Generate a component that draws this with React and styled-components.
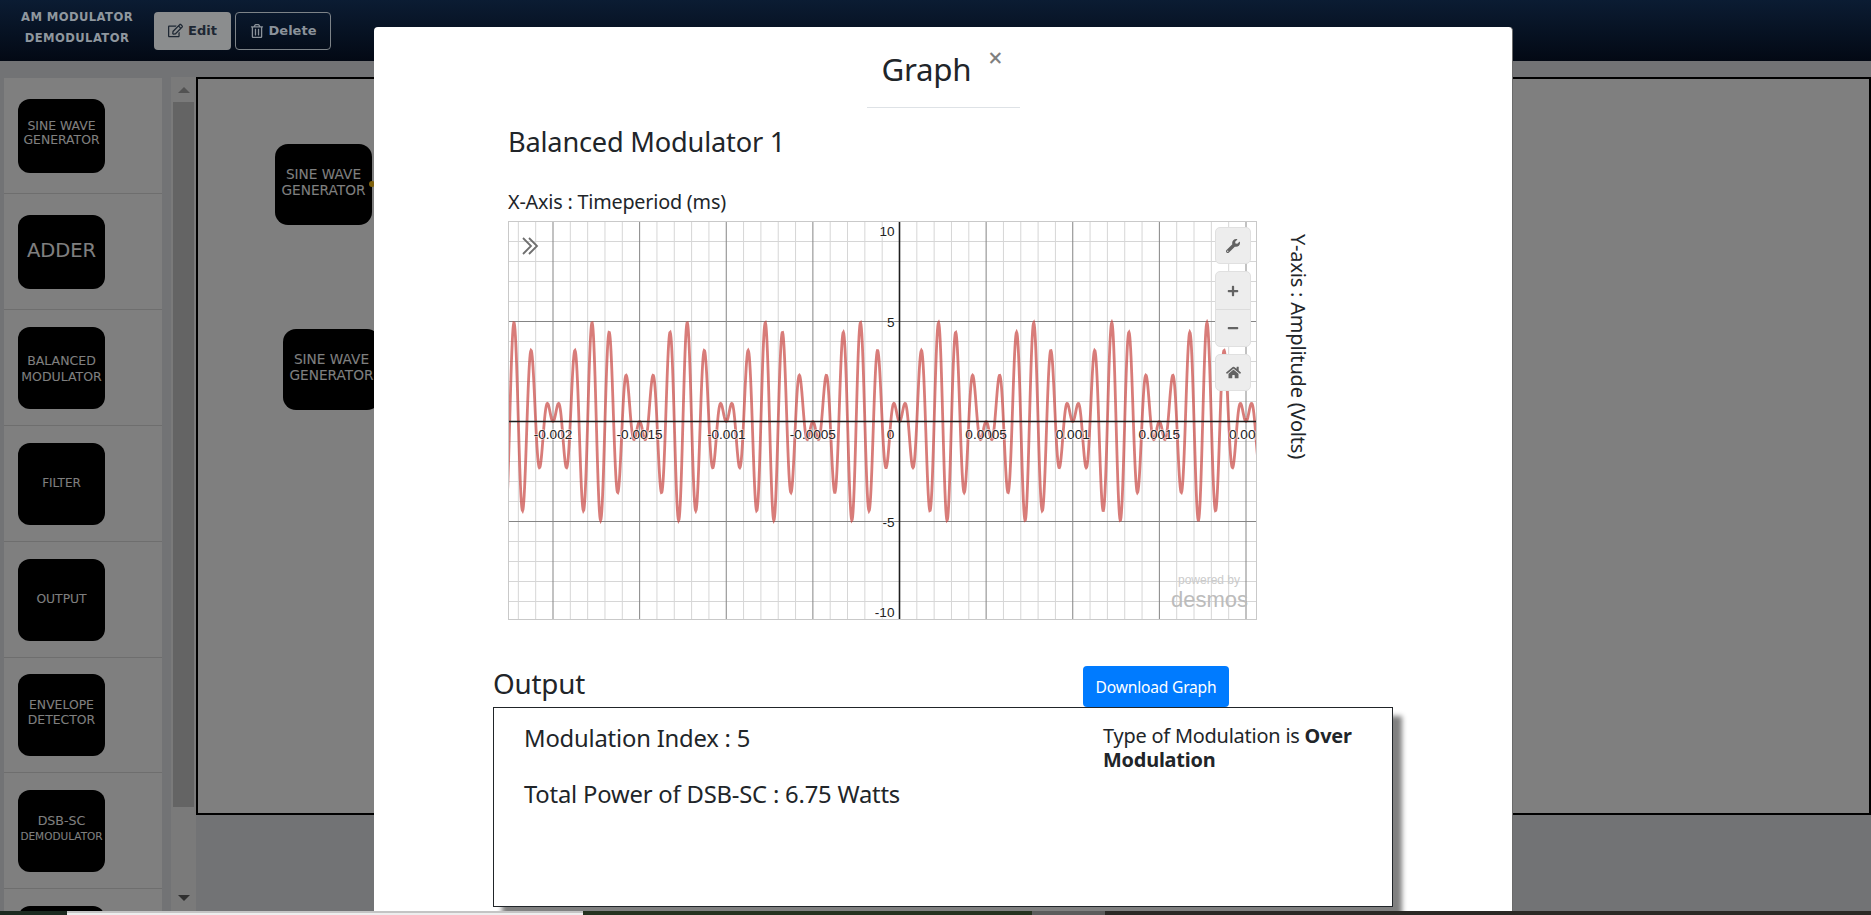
import React from 'react'
import styled, { createGlobalStyle } from 'styled-components'
import { FaRegEdit, FaRegTrashAlt, FaWrench, FaPlus, FaMinus, FaHome } from 'react-icons/fa'

const GlobalStyle = createGlobalStyle`
  html, body { margin: 0; height: 100%; overflow: hidden; background: #e5e6ea; }
  * { box-sizing: border-box; }
`

const blocks = [
  { lines: ['SINE WAVE', 'GENERATOR'], row: 116, h: 74, top: 20, size: 12.4, lh: 14.5 },
  { lines: ['ADDER'], row: 116, h: 74, top: 24, size: 19.5, lh: 24 },
  { lines: ['BALANCED', 'MODULATOR'], row: 116, h: 82, top: 26, size: 12.5, lh: 16 },
  { lines: ['FILTER'], row: 116, h: 82, top: 32, size: 12, lh: 16 },
  { lines: ['OUTPUT'], row: 116, h: 82, top: 32, size: 12.3, lh: 16 },
  { lines: ['ENVELOPE', 'DETECTOR'], row: 115, h: 82, top: 23, size: 12.4, lh: 15 },
  { lines: ['DSB-SC', <small key="d">DEMODULATOR</small>], row: 116, h: 82, top: 23, size: 12.6, lh: 15 },
  { lines: [], row: 116, h: 82, top: 0, size: 12, lh: 15 },
]

// graph scale, measured off the desmos plot
const W = 747
const H = 397
const X0 = 390.5
const Y0 = 199.5
const PX_X = 173250
const PX_Y = 20

function curvePath() {
  let d = ''
  for (let px = -2; px <= W + 2; px += 0.4) {
    const t = (px - X0) / PX_X
    const y = 5 * Math.sin(2 * Math.PI * 1000 * t) * Math.sin(2 * Math.PI * 10000 * t)
    d += (d ? 'L' : 'M') + px.toFixed(1) + ' ' + (Y0 - y * PX_Y).toFixed(2)
  }
  return d
}

function Graph() {
  const minorX = []
  const majorX = []
  for (let i = -23; i <= 21; i++) {
    const x = X0 + i * 17.325
    if (i % 5 === 0) majorX.push(x)
    else minorX.push(x)
  }
  const minorY = []
  const majorY = []
  for (let i = -10; i <= 10; i++) {
    if (i % 5 === 0) majorY.push(Y0 - i * PX_Y)
    else minorY.push(Y0 - i * PX_Y)
  }
  const xLabels = [
    ['-0.002', -4], ['-0.0015', -3], ['-0.001', -2], ['-0.0005', -1],
    ['0.0005', 1], ['0.001', 2], ['0.0015', 3], ['0.002', 4],
  ]
  return (
    <PlotSvg width={W} height={H} viewBox={`0 0 ${W} ${H}`}>
      <g stroke="#d6d6d6" strokeWidth="1">
        {minorX.map((x) => <line key={x} x1={x} x2={x} y1="0" y2={H} />)}
        {minorY.map((y) => <line key={y} x1="0" x2={W} y1={y} y2={y} />)}
      </g>
      <g stroke="#858585" strokeWidth="1">
        {majorX.map((x) => <line key={x} x1={x} x2={x} y1="0" y2={H} />)}
        {majorY.map((y) => <line key={y} x1="0" x2={W} y1={y} y2={y} />)}
      </g>
      <path d={curvePath()} fill="none" stroke="#c74440" strokeOpacity="0.7" strokeWidth="2.8" />
      <g stroke="#1e1e1e" strokeWidth="1.6">
        <line x1={X0} x2={X0} y1="0" y2={H} />
        <line x1="0" x2={W} y1={Y0} y2={Y0} />
      </g>
      <AxisText>
        {xLabels.map(([label, n]) => (
          <text key={label} x={X0 + n * 86.625} y={Y0 + 17} textAnchor="middle">{label}</text>
        ))}
        <text x={X0 - 9} y={Y0 + 17} textAnchor="middle">0</text>
        <text x={X0 - 5} y={Y0 - 186} textAnchor="end">10</text>
        <text x={X0 - 5} y={Y0 - 95} textAnchor="end">5</text>
        <text x={X0 - 5} y={Y0 + 105} textAnchor="end">-5</text>
        <text x={X0 - 5} y={Y0 + 195} textAnchor="end">-10</text>
      </AxisText>
      <polyline points="14,16 22,24 14,32" fill="none" stroke="#6f6f6f" strokeWidth="1.8" />
      <polyline points="20,16 28,24 20,32" fill="none" stroke="#6f6f6f" strokeWidth="1.8" />
      <text x="731" y="362" textAnchor="end" fontFamily="Liberation Sans" fontSize="12" fill="#cbcbcb">powered by</text>
      <text x="739" y="385" textAnchor="end" fontFamily="Liberation Sans" fontSize="22" fill="#bcbcbc">desmos</text>
    </PlotSvg>
  )
}

export default function App() {
  return (
    <>
      <GlobalStyle />
      <Header>
        <Brand>AM MODULATOR<br />DEMODULATOR</Brand>
        <EditButton><FaRegEdit size={15} /> Edit</EditButton>
        <DeleteButton><FaRegTrashAlt size={14} /> Delete</DeleteButton>
      </Header>

      <Workspace>
        <Sidebar>
          {blocks.map((b, i) => (
            <SideRow key={i} $h={b.row}>
              <Block $h={b.h} $top={b.top} $size={b.size} $lh={b.lh}>
                {b.lines.map((l, j) => <div key={j}>{l}</div>)}
              </Block>
            </SideRow>
          ))}
        </Sidebar>
        <Scrollbar>
          <ArrowUp />
          <Thumb />
          <ArrowDown />
        </Scrollbar>
        <Canvas>
          <Node $left={77} $top={65}>SINE WAVE<br />GENERATOR<Port /></Node>
          <Node $left={85} $top={250}>SINE WAVE<br />GENERATOR</Node>
        </Canvas>
      </Workspace>

      <Backdrop />

      <Modal>
        <ModalHeader>
          <ModalTitle>Graph</ModalTitle>
          <Close>×</Close>
        </ModalHeader>

        <GraphSection>
          <BlockName>Balanced Modulator 1</BlockName>
          <AxisLabel>X-Axis : Timeperiod (ms)</AxisLabel>
          <GraphRow>
            <PlotBox>
              <Graph />
              <Controls>
                <CtrlButton><FaWrench size={14} /></CtrlButton>
                <CtrlGroup>
                  <CtrlHalf><FaPlus size={12} /></CtrlHalf>
                  <CtrlHalf><FaMinus size={12} /></CtrlHalf>
                </CtrlGroup>
                <CtrlButton><FaHome size={15} /></CtrlButton>
              </Controls>
            </PlotBox>
            <YLabel>Y-axis : Amplitude (Volts)</YLabel>
          </GraphRow>
        </GraphSection>

        <OutputSection>
          <OutputHead>
            <OutputTitle>Output</OutputTitle>
            <DownloadButton>Download Graph</DownloadButton>
          </OutputHead>
          <OutputBox>
            <Readings>
              <Reading>Modulation Index : 5</Reading>
              <Reading>Total Power of DSB-SC : 6.75 Watts</Reading>
            </Readings>
            <ModType>Type of Modulation is <b>Over Modulation</b></ModType>
          </OutputBox>
        </OutputSection>
      </Modal>

      <BottomStrip>
        <StripPart $w={67} $bg="#1c2a20" />
        <StripPart $w={516} $bg="#eeeeee" $line />
        <StripPart $w={449} $bg="#25321f" />
        <StripPart $w={73} $bg="#5c5c5c" />
        <StripPart $grow $bg="#2b2925" />
      </BottomStrip>
    </>
  )
}

const uiFont = `"Noto Sans", "Open Sans", sans-serif`

const Header = styled.header`
  position: relative;
  z-index: 20;
  height: 61px;
  display: flex;
  align-items: center;
  background: linear-gradient(#0b1c33, #030914);
  font-family: "DejaVu Sans", sans-serif;
  font-weight: 700;
`

const Brand = styled.div`
  width: 154px;
  text-align: center;
  color: #8f979e;
  font-size: 11.6px;
  line-height: 21px;
  letter-spacing: 0.4px;
  padding-bottom: 6px;
`

const EditButton = styled.div`
  width: 77px;
  height: 38px;
  display: flex;
  align-items: center;
  justify-content: center;
  gap: 5px;
  border-radius: 4px;
  background: #8b8d8e;
  color: #1d2733;
  font-size: 13px;
`

const DeleteButton = styled.div`
  width: 96px;
  height: 38px;
  margin-left: 4px;
  display: flex;
  align-items: center;
  justify-content: center;
  gap: 5px;
  border: 1px solid #7d8388;
  border-radius: 4px;
  color: #8b929a;
  font-size: 13px;
`

const Workspace = styled.div`
  display: flex;
  padding-top: 16px;
  height: 854px;
`

const Sidebar = styled.div`
  width: 158px;
  margin: 1px 0 0 4px;
  overflow: hidden;
  flex: none;
`

const SideRow = styled.div`
  height: ${(p) => p.$h}px;
  padding-left: 14px;
  display: flex;
  align-items: center;
  background: #fff;
  border-bottom: 1px solid #dddddd;
`

const Block = styled.div`
  width: 87px;
  height: ${(p) => p.$h}px;
  padding-top: ${(p) => p.$top}px;
  background: #000;
  border-radius: 12px;
  color: #fff;
  text-align: center;
  white-space: nowrap;
  font-family: "DejaVu Sans", sans-serif;
  font-size: ${(p) => p.$size}px;
  line-height: ${(p) => p.$lh}px;

  small {
    font-size: 10.5px;
  }
`

const Scrollbar = styled.div`
  position: relative;
  width: 25px;
  margin-left: 9px;
  height: 834px;
  flex: none;
  background: #f4f4f4;
`

const Thumb = styled.div`
  position: absolute;
  left: 2px;
  top: 25px;
  width: 21px;
  height: 705px;
  background: #c8c8c8;
`

const ArrowUp = styled.div`
  position: absolute;
  left: 7px;
  top: 10px;
  border-left: 6px solid transparent;
  border-right: 6px solid transparent;
  border-bottom: 6px solid #a6a6a6;
`

const ArrowDown = styled.div`
  position: absolute;
  left: 7px;
  bottom: 10px;
  border-left: 6px solid transparent;
  border-right: 6px solid transparent;
  border-top: 6px solid #5e5e5e;
`

const Canvas = styled.div`
  position: relative;
  flex: 1;
  height: 738px;
  background: #fff;
  border: 2px solid #000;
  z-index: 0;
`

const Node = styled.div`
  position: absolute;
  left: ${(p) => p.$left}px;
  top: ${(p) => p.$top}px;
  width: 97px;
  height: 81px;
  padding-top: 22px;
  background: #000;
  border-radius: 13px;
  color: #fff;
  text-align: center;
  white-space: nowrap;
  font-family: "DejaVu Sans", sans-serif;
  font-size: 13.7px;
  line-height: 16px;
`

const Port = styled.span`
  position: absolute;
  right: -3px;
  top: 37px;
  width: 6px;
  height: 6px;
  border-radius: 50%;
  background: #ffc21a;
`

const Backdrop = styled.div`
  position: fixed;
  inset: 0;
  z-index: 10;
  background: rgba(0, 0, 0, 0.5);
`

const Modal = styled.div`
  position: fixed;
  z-index: 30;
  left: 374px;
  top: 27px;
  width: 1139px;
  height: 900px;
  background: #fff;
  border-radius: 4px;
  border-right: 1px solid #6a6a6a;
  color: #212529;
  font-family: ${uiFont};
`

const ModalHeader = styled.div`
  position: relative;
  width: 153px;
  height: 81px;
  margin: 0 auto;
  padding: 25px 0 0 15px;
  border-bottom: 1px solid #dee2e6;
`

const ModalTitle = styled.div`
  font-size: 31.3px;
  line-height: 34px;
  letter-spacing: -0.3px;
`

const Close = styled.div`
  position: absolute;
  right: 17px;
  top: 18px;
  font-size: 25px;
  line-height: 24px;
  font-weight: 500;
  color: #808080;
`

const GraphSection = styled.section`
  padding-left: 134px;
`

const BlockName = styled.div`
  margin-top: 16px;
  font-size: 27.2px;
  line-height: 36px;
  letter-spacing: -0.2px;
`

const AxisLabel = styled.div`
  margin-top: 29px;
  font-size: 19.8px;
  line-height: 26px;
  letter-spacing: -0.2px;
`

const GraphRow = styled.div`
  display: flex;
  margin-top: 6px;
`

const PlotBox = styled.div`
  position: relative;
  width: 749px;
  height: 399px;
  border: 1px solid #c9c9c9;
  overflow: hidden;
  flex: none;
`

const PlotSvg = styled.svg`
  display: block;
`

const AxisText = styled.g`
  font-family: "Liberation Sans", sans-serif;
  font-size: 13.6px;
  fill: #222;
  stroke: #fff;
  stroke-width: 1.5px;
  stroke-opacity: 0.6;
  paint-order: stroke;
`

const Controls = styled.div`
  position: absolute;
  left: 706px;
  top: 5px;
  width: 36px;
  display: flex;
  flex-direction: column;
  gap: 7px;
`

const CtrlButton = styled.div`
  height: 37px;
  display: flex;
  align-items: center;
  justify-content: center;
  background: #ededed;
  border: 1px solid #e0e0e0;
  border-radius: 5px;
  color: #636363;
`

const CtrlGroup = styled.div`
  background: #ededed;
  border: 1px solid #e0e0e0;
  border-radius: 5px;
`

const CtrlHalf = styled.div`
  height: 37px;
  display: flex;
  align-items: center;
  justify-content: center;
  color: #636363;

  & + & {
    border-top: 1px solid #dcdcdc;
  }
`

const YLabel = styled.div`
  margin: 13px 0 0 28px;
  writing-mode: vertical-rl;
  font-size: 20px;
  line-height: 26px;
  letter-spacing: -0.2px;
`

const OutputSection = styled.section`
  margin: 46px 0 0 119px;
  width: 900px;
`

const OutputHead = styled.div`
  display: flex;
  height: 41px;
`

const OutputTitle = styled.div`
  width: 590px;
  font-size: 27.8px;
  line-height: 34px;
  letter-spacing: -0.2px;
`

const DownloadButton = styled.div`
  width: 146px;
  height: 41px;
  display: flex;
  align-items: center;
  justify-content: center;
  background: #007bff;
  border-radius: 4px;
  color: #fff;
  font-size: 15.6px;
  letter-spacing: -0.2px;
`

const OutputBox = styled.div`
  height: 200px;
  display: flex;
  border: 1px solid #212529;
  box-shadow: 9px 9px 5px #808080;
  background: #fff;
`

const Readings = styled.div`
  width: 609px;
  padding: 15px 0 0 30px;
`

const Reading = styled.div`
  font-size: 23.8px;
  line-height: 30px;
  margin-bottom: 26px;
  letter-spacing: -0.2px;
`

const ModType = styled.div`
  width: 262px;
  padding-top: 16px;
  font-size: 19.9px;
  line-height: 24px;
  letter-spacing: -0.2px;
`

const BottomStrip = styled.div`
  position: fixed;
  z-index: 40;
  left: 0;
  right: 0;
  bottom: 0;
  height: 4px;
  display: flex;
`

const StripPart = styled.div`
  width: ${(p) => (p.$grow ? 'auto' : `${p.$w}px`)};
  flex: ${(p) => (p.$grow ? 1 : 'none')};
  background: ${(p) => p.$bg};
  border-top: ${(p) => (p.$line ? '2px solid #c4c4c4' : 'none')};
`
